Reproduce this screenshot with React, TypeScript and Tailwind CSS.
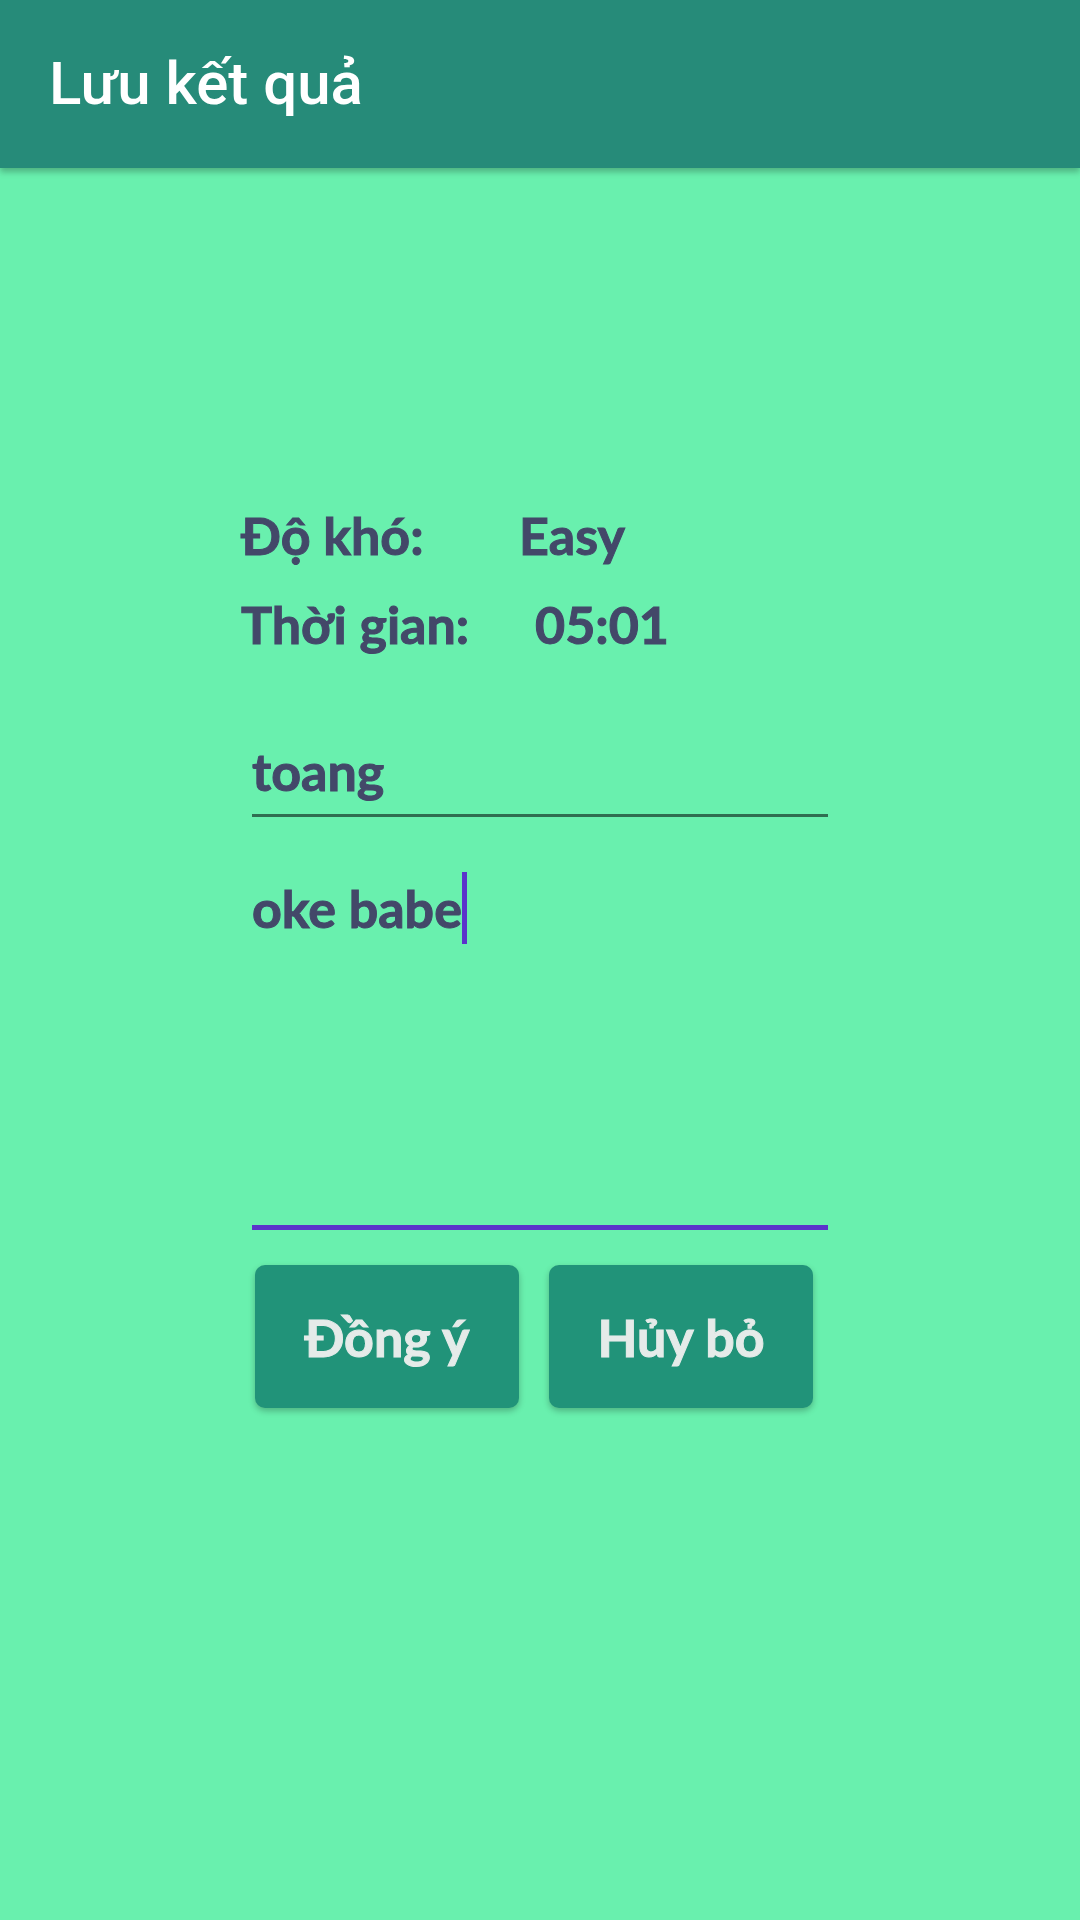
export default function App() {
  const body = { fontFamily: "Lato, 'Noto Sans', sans-serif" };
  const txt = "font-bold text-[52px] [-webkit-text-stroke:1px_currentColor]";
  return (
    <div className="w-[1080px] h-[1920px] bg-[#69f0ae] flex flex-col overflow-hidden">
      <div className="h-[168px] bg-[#268b79] shadow-[0_4px_6px_rgba(0,0,0,0.25)] flex items-center pl-[49px] shrink-0 relative z-10">
        <span className="text-white text-[60px] font-medium leading-none" style={{ fontFamily: "Roboto, sans-serif" }}>
          Lưu kết quả
        </span>
      </div>
      <div className="flex flex-col" style={body}>
        <div className={`mt-[322px] pl-[241px] flex flex-col text-[#434869] ${txt}`}>
          <div className="flex h-[89px] items-center">
            <span className="w-[278px]">Độ khó:</span>
            <span>Easy</span>
          </div>
          <div className="flex h-[89px] items-center">
            <span className="w-[294px]">Thời gian:</span>
            <span>05:01</span>
          </div>
        </div>
        <div className={`ml-[252px] w-[576px] mt-[63px] border-b-[3px] border-[#2f6e51] pb-[3px] h-[86px] flex items-center text-[#434869] ${txt}`}>
          toang
        </div>
        <div className={`ml-[252px] w-[576px] mt-[51px] h-[362px] border-b-[5px] border-[#5b34cb] text-[#434869] ${txt}`}>
          <div className="h-[80px] flex items-center">
            <span>oke babe</span>
            <span className="inline-block w-[5px] h-[72px] bg-[#5b34cb] [-webkit-text-stroke:0]" />
          </div>
        </div>
        <div className="mt-[35px] ml-[255px] flex gap-[30px]">
          <div className={`w-[264px] h-[143px] rounded-[10px] bg-[#219379] shadow-[0_3px_6px_rgba(0,0,0,0.25)] flex items-center justify-center text-[#e5ebe9] ${txt}`}>
            Đồng ý
          </div>
          <div className={`w-[264px] h-[143px] rounded-[10px] bg-[#219379] shadow-[0_3px_6px_rgba(0,0,0,0.25)] flex items-center justify-center text-[#e5ebe9] ${txt}`}>
            Hủy bỏ
          </div>
        </div>
      </div>
    </div>
  );
}
